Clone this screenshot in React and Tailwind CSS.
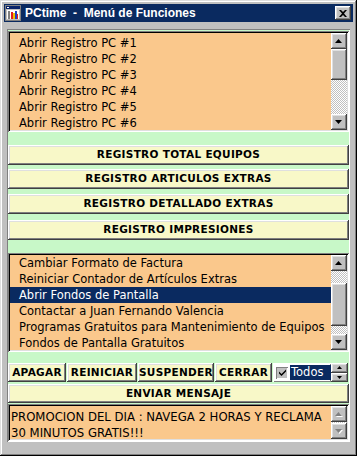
import React from 'react';

const raised = 'shadow-[inset_-1px_-1px_#404040,inset_1px_1px_#ffffff,inset_-2px_-2px_#808080,inset_2px_2px_#dfdfdf]';
const sunken = 'shadow-[inset_1px_1px_#808080,inset_-1px_-1px_#ffffff,inset_2px_2px_#000000,inset_-2px_-2px_#dfdfdf]';
const checker = 'bg-[repeating-conic-gradient(#c0c0c0_0%_25%,#ffffff_0%_50%)] bg-size-[2px_2px]';

const Arrow = ({ dir = 'up', disabled = false }) => (
  <svg width="8" height="5" viewBox="0 0 8 5">
    {disabled && (
      <polygon points={dir === 'up' ? '4.5,1 8,5 1,5' : '1,1 8,1 4.5,5'} fill="#ffffff" />
    )}
    <polygon
      points={dir === 'up' ? '3.5,0 7,4 0,4' : '0,0 7,0 3.5,4'}
      fill={disabled ? '#808080' : '#000000'}
    />
  </svg>
);

const ScrollBtn = ({ dir, disabled }) => (
  <div className={`w-[16px] h-[16px] shrink-0 bg-[#c0c0c0] flex items-center justify-center ${raised}`}>
    <Arrow dir={dir} disabled={disabled} />
  </div>
);

const Scrollbar = ({ before, thumb }) => (
  <div className="w-[16px] h-full flex flex-col shrink-0">
    <ScrollBtn dir="up" />
    <div className={`shrink-0 ${checker}`} style={{ height: before }} />
    <div className={`shrink-0 bg-[#c0c0c0] ${raised}`} style={{ height: thumb }} />
    <div className={`flex-1 ${checker}`} />
    <ScrollBtn dir="down" />
  </div>
);

const ListBox = ({ items, selected, before, thumb, height, top }) => (
  <div className={`flex p-[2px] bg-[#fac88c] ${sunken}`} style={{ height }}>
    <div
      className="flex-1 overflow-hidden font-['DejaVu_Sans',sans-serif] text-[11.5px] text-black"
      style={{ paddingTop: top }}
    >
      {items.map((t, i) => (
        <div
          key={t}
          className={`h-[16px] leading-[16px] pl-[9px] whitespace-nowrap ${i === selected ? 'bg-[#0a2a60] text-white' : ''}`}
        >
          {t}
        </div>
      ))}
    </div>
    <Scrollbar before={before} thumb={thumb} />
  </div>
);

const YButton = ({ children, className = '' }) => (
  <div
    className={`bg-[#f8f8c8] flex items-center justify-center font-['DejaVu_Sans',sans-serif] font-bold text-[10.5px] tracking-[0.3px] text-black ${raised} ${className}`}
  >
    {children}
  </div>
);

const AppIcon = () => (
  <svg width="16" height="16" viewBox="0 0 16 16">
    <rect x="0" y="0" width="16" height="16" fill="#808080" />
    <rect x="1" y="1" width="14" height="14" fill="#c0c0c0" />
    <rect x="1" y="1" width="14" height="3" fill="#0a246a" />
    <rect x="2" y="2" width="2" height="1" fill="#ffffff" />
    <rect x="2" y="5" width="12" height="9" fill="#ffffff" />
    <rect x="3" y="6" width="2" height="8" fill="#808080" />
    <rect x="6" y="7" width="2" height="7" fill="#e02020" />
    <rect x="8" y="8" width="2" height="6" fill="#f0c000" />
    <rect x="10" y="6" width="2" height="8" fill="#2040c0" />
    <rect x="12" y="9" width="1" height="5" fill="#e02020" />
  </svg>
);

export default function App() {
  return (
    <div className="w-[357px] h-[456px] bg-[#c0c0c0] p-[4px] flex flex-col shadow-[inset_-1px_-1px_#000000,inset_1px_1px_#dfdfdf,inset_-2px_-2px_#808080,inset_2px_2px_#ffffff]">
      {/* title bar */}
      <div className="h-[18px] bg-[#0a2a60] flex items-center pl-[1px] pr-[2px]">
        <AppIcon />
        <span className="ml-[4px] text-white font-bold text-[12px] font-['Liberation_Sans',Arial,sans-serif] whitespace-pre">
          PCtime  -  Menú de Funciones
        </span>
        <div className={`ml-auto w-[16px] h-[14px] bg-[#c0c0c0] flex items-center justify-center ${raised}`}>
          <svg width="8" height="7" viewBox="0 0 8 7">
            <path d="M0 0h2l2 2 2-2h2L5 3.5 8 7H6L4 5 2 7H0l3-3.5z" fill="#000" />
          </svg>
        </div>
      </div>

      {/* main panel */}
      <div className="mt-[7px] mx-[3px] h-[413px] p-[1px] bg-[#c8f8c8] flex flex-col shadow-[inset_1px_1px_#808080,inset_-1px_-1px_#ffffff]">
        <div className="mt-[1px]">
          <ListBox
            height={101}
            top={2}
            before={0}
            thumb={31}
            items={[
              'Abrir Registro PC #1',
              'Abrir Registro PC #2',
              'Abrir Registro PC #3',
              'Abrir Registro PC #4',
              'Abrir Registro PC #5',
              'Abrir Registro PC #6',
            ]}
          />
        </div>

        <YButton className="mt-[13px] h-[20px]">REGISTRO TOTAL EQUIPOS</YButton>
        <YButton className="mt-[4px] h-[20px]">REGISTRO ARTICULOS EXTRAS</YButton>
        <YButton className="mt-[5px] h-[20px]">REGISTRO DETALLADO EXTRAS</YButton>
        <YButton className="mt-[6px] h-[20px]">REGISTRO IMPRESIONES</YButton>

        <div className="mt-[13px]">
          <ListBox
            height={99}
            top={0}
            before={12}
            thumb={43}
            selected={2}
            items={[
              'Cambiar Formato de Factura',
              'Reiniciar Contador de Artículos Extras',
              'Abrir Fondos de Pantalla',
              'Contactar a Juan Fernando Valencia',
              'Programas Gratuitos para Mantenimiento de Equipos',
              'Fondos de Pantalla Gratuitos',
            ]}
          />
        </div>

        {/* action row */}
        <div className="mt-[11px] h-[19px] flex">
          <YButton className="w-[58px] h-full">APAGAR</YButton>
          <YButton className="ml-[1px] w-[70px] h-full">REINICIAR</YButton>
          <YButton className="ml-[1px] w-[76px] h-full">SUSPENDER</YButton>
          <YButton className="ml-[1px] w-[57px] h-full">CERRAR</YButton>
          <div className="ml-[1px] w-[58px] h-full bg-white flex items-center pl-[3px] shadow-[inset_1px_1px_#ffffff,inset_-1px_-1px_#808080]">
            <div className="w-[12px] h-[12px] bg-[#c0c0c0] flex items-center justify-center shadow-[inset_1px_1px_#808080,inset_-1px_-1px_#ffffff]">
              <svg width="7" height="7" viewBox="0 0 7 7">
                <path d="M0 2.5l2.5 2.5L7 0.5V2.5L2.5 7 0 4.5z" fill="#000" />
              </svg>
            </div>
            <div className="ml-[2px] flex-1 h-[15px] bg-[#0a2a60] text-white text-[11.5px] leading-[15px] pl-[1px] font-['DejaVu_Sans',sans-serif]">
              Todos
            </div>
          </div>
          <div className="w-[17px] h-full flex flex-col">
            <div className={`flex-1 bg-[#c0c0c0] flex items-center justify-center ${raised}`}>
              <svg width="5" height="3" viewBox="0 0 5 3"><polygon points="2.5,0 5,3 0,3" fill="#000" /></svg>
            </div>
            <div className={`flex-1 bg-[#c0c0c0] flex items-center justify-center ${raised}`}>
              <svg width="5" height="3" viewBox="0 0 5 3"><polygon points="0,0 5,0 2.5,3" fill="#000" /></svg>
            </div>
          </div>
        </div>

        <YButton className="mt-[2px] h-[19px]">ENVIAR MENSAJE</YButton>

        {/* message box */}
        <div className={`mt-[1px] h-[37px] flex p-[2px] bg-[#fac88c] ${sunken}`}>
          <div className="flex-1 pl-[1px] pt-[3px] font-['DejaVu_Sans',sans-serif] text-[11.7px] leading-[16px] text-black">
            PROMOCION DEL DIA : NAVEGA 2 HORAS Y RECLAMA 30 MINUTOS GRATIS!!!
          </div>
          <div className="w-[16px] h-full flex flex-col">
            <ScrollBtn dir="up" disabled />
            <div className={`flex-1 ${checker}`} />
            <ScrollBtn dir="down" disabled />
          </div>
        </div>
      </div>
    </div>
  );
}
